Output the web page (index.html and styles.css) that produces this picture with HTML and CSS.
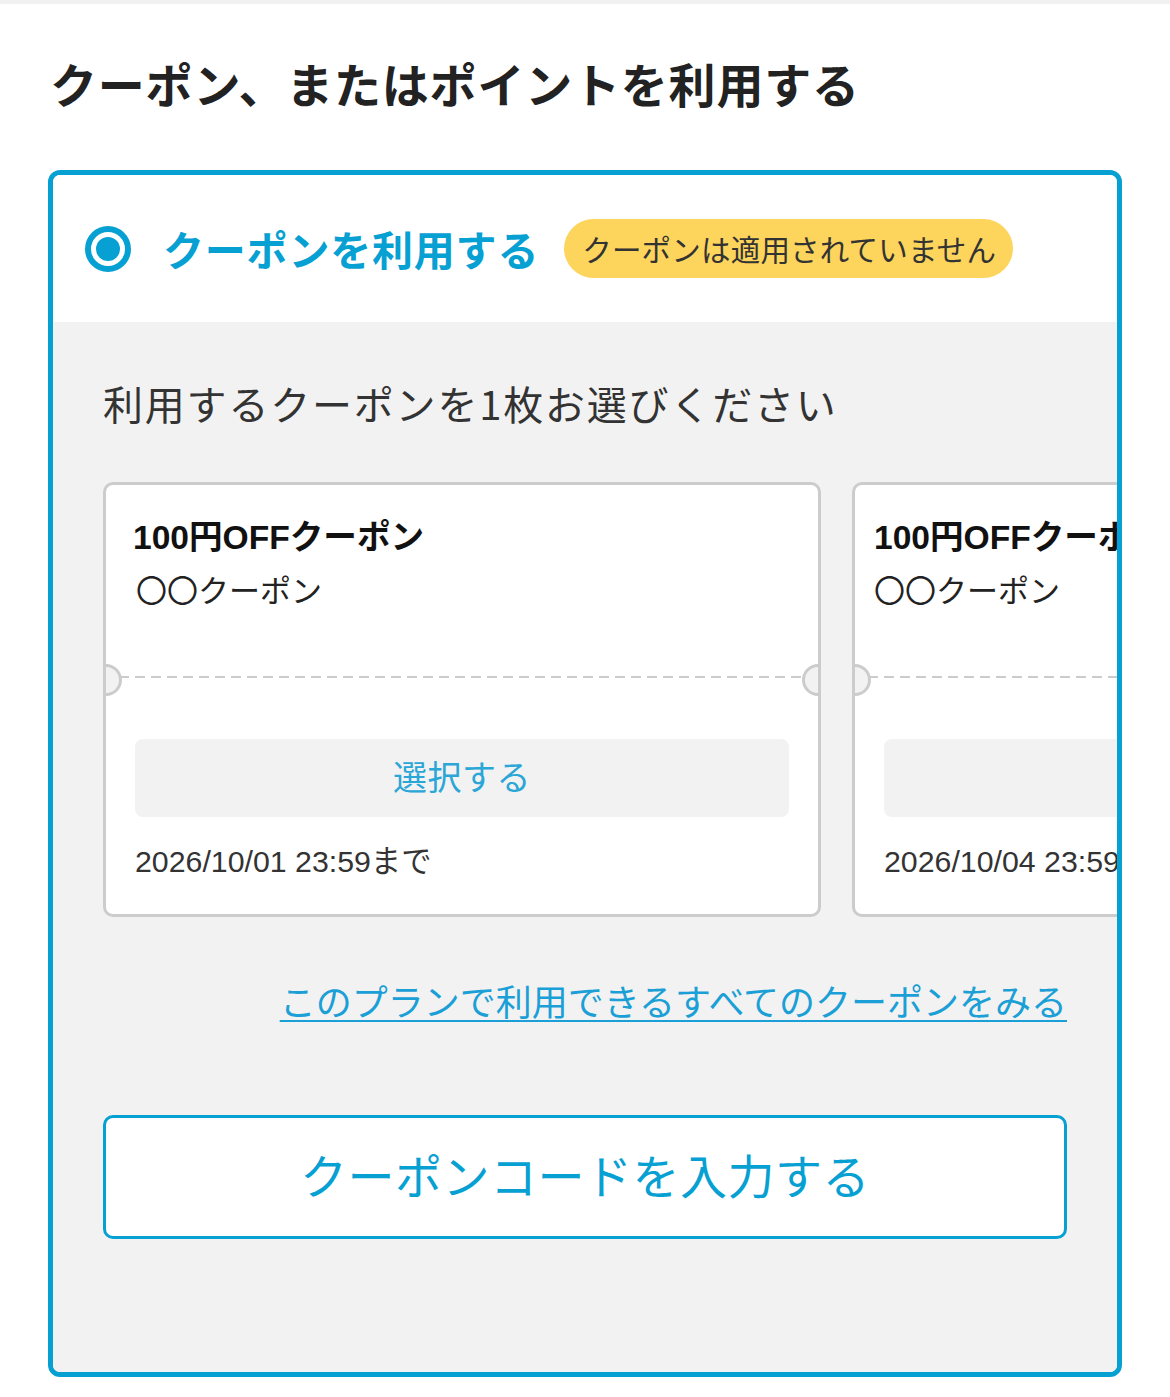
FILE: index.html
```html
<!DOCTYPE html>
<html lang="ja">
<head>
<meta charset="utf-8">
<title>クーポン、またはポイントを利用する</title>
<link rel="stylesheet" href="styles.css">
</head>
<body>
<div class="topbar"></div>
<main class="page">
  <h1 class="heading">クーポン、またはポイントを利用する</h1>
  <section class="box">
    <div class="box-head">
      <span class="radio"><span class="radio-dot"></span></span>
      <span class="box-title">クーポンを利用する</span>
      <span class="badge">クーポンは適用されていません</span>
    </div>
    <div class="box-body">
      <p class="prompt">利用するクーポンを1枚お選びください</p>
      <div class="cards">
        <div class="card">
          <div class="card-top">
            <div class="card-title">100円OFFクーポン</div>
            <div class="card-sub">〇〇クーポン</div>
          </div>
          <div class="card-divider"></div>
          <div class="card-bottom">
            <button class="select-btn">選択する</button>
            <div class="card-date">2026/10/01 23:59まで</div>
          </div>
        </div>
        <div class="card card-peek">
          <div class="card-top">
            <div class="card-title">100円OFFクーポン</div>
            <div class="card-sub">〇〇クーポン</div>
          </div>
          <div class="card-divider"></div>
          <div class="card-bottom">
            <button class="select-btn">選択する</button>
            <div class="card-date">2026/10/04 23:59まで</div>
          </div>
        </div>
      </div>
      <div class="link-row">
        <a class="all-link" href="#">このプランで利用できるすべてのクーポンをみる</a>
      </div>
      <button class="code-btn">クーポンコードを入力する</button>
    </div>
  </section>
</main>
</body>
</html>
```

FILE: styles.css
```css
* { box-sizing: border-box; }
html, body { margin: 0; padding: 0; background: #fff; }
body {
  font-family: "Noto Sans CJK JP", "Noto Sans", sans-serif;
  color: #222;
}
.topbar { height: 4px; background: #f1f1f1; }
.page { padding: 0 48px 19px; }
.heading {
  margin: 45px 0 53px;
  font-size: 47px;
  line-height: 68px;
  letter-spacing: 0.8px;
  font-weight: 700;
  color: #222;
  padding-left: 2px;
}
.box {
  border: 5px solid #06a0d3;
  border-radius: 12px;
  overflow: hidden;
}
.box-head {
  height: 147px;
  display: flex;
  align-items: center;
  padding-left: 32px;
  background: #fff;
}
.radio {
  width: 46px;
  height: 46px;
  border-radius: 50%;
  border: 6px solid #06a0d3;
  display: flex;
  align-items: center;
  justify-content: center;
  flex: none;
}
.radio-dot {
  width: 24px;
  height: 24px;
  border-radius: 50%;
  background: #06a0d3;
}
.box-title {
  margin-left: 32px;
  font-size: 41px;
  letter-spacing: 0.8px;
  font-weight: 700;
  color: #06a0d3;
  line-height: 1;
}
.badge {
  margin-left: 25px;
  height: 59px;
  padding: 0 17px 2px 18px;
  border-radius: 30px;
  background: #fdd55c;
  color: #333;
  font-size: 29.5px;
  letter-spacing: 0.2px;
  display: flex;
  align-items: center;
}
.box-body {
  background: #f2f2f2;
  padding: 53px 50px 133px;
}
.prompt {
  margin: 0 0 51px;
  font-size: 40px;
  line-height: 56px;
  letter-spacing: 1.8px;
  color: #333;
}
.cards {
  display: flex;
  gap: 31px;
  margin-right: -50px;
  overflow: hidden;
}
.card {
  position: relative;
  flex: none;
  width: 718px;
  background: #fff;
  border: 3px solid #cccccc;
  border-radius: 10px;
  font-family: "Liberation Sans", "Noto Sans CJK JP", sans-serif;
}
.card::before, .card::after {
  content: "";
  position: absolute;
  top: 179px;
  width: 26px;
  height: 26px;
  border-radius: 50%;
  background: #f2f2f2;
  border: 3px solid #cccccc;
}
.card::before { left: -16px; clip-path: inset(0 0 0 50%); }
.card::after { right: -16px; clip-path: inset(0 50% 0 0); }
.card-top {
  height: 191px;
  padding: 30px 29px 0 27px;
}
.card-peek .card-top { padding-left: 19px; }
.card-title {
  font-size: 33.6px;
  line-height: 46px;
  font-weight: 700;
  color: #111;
  white-space: nowrap;
}
.card-sub {
  margin-top: 11px;
  padding-left: 3px;
  font-size: 31px;
  line-height: 40px;
  color: #222;
  white-space: nowrap;
}
.card-peek .card-sub { padding-left: 0; }
.card-divider {
  height: 2px;
  margin: 0 13px;
  background: repeating-linear-gradient(to right, #cccccc 0 10px, transparent 10px 16px);
}
.card-bottom {
  padding: 61px 29px 32px;
}
.select-btn {
  display: block;
  width: 100%;
  height: 78px;
  border: 0;
  border-radius: 8px;
  background: #f2f2f2;
  color: #2aa6d7;
  font-family: "Noto Sans CJK JP", sans-serif;
  font-size: 34px;
  letter-spacing: 0.5px;
  padding: 0 0 5px;
}
.card-date {
  margin-top: 25px;
  font-size: 30.3px;
  line-height: 40px;
  color: #333;
  white-space: nowrap;
}
.link-row {
  margin-top: 58px;
  height: 50px;
  text-align: right;
}
.all-link {
  display: inline-block;
  font-size: 36px;
  line-height: 50px;
  color: #1a9fd6;
  text-decoration: underline;
  text-decoration-thickness: 2px;
  text-underline-offset: 4px;
}
.code-btn {
  display: block;
  width: 100%;
  margin-top: 90px;
  height: 124px;
  border: 3px solid #06a0d3;
  border-radius: 10px;
  background: #fff;
  color: #06a0d3;
  font-family: "Noto Sans CJK JP", sans-serif;
  font-size: 47px;
  letter-spacing: 0.5px;
  padding: 0 0 7px;
}
```
